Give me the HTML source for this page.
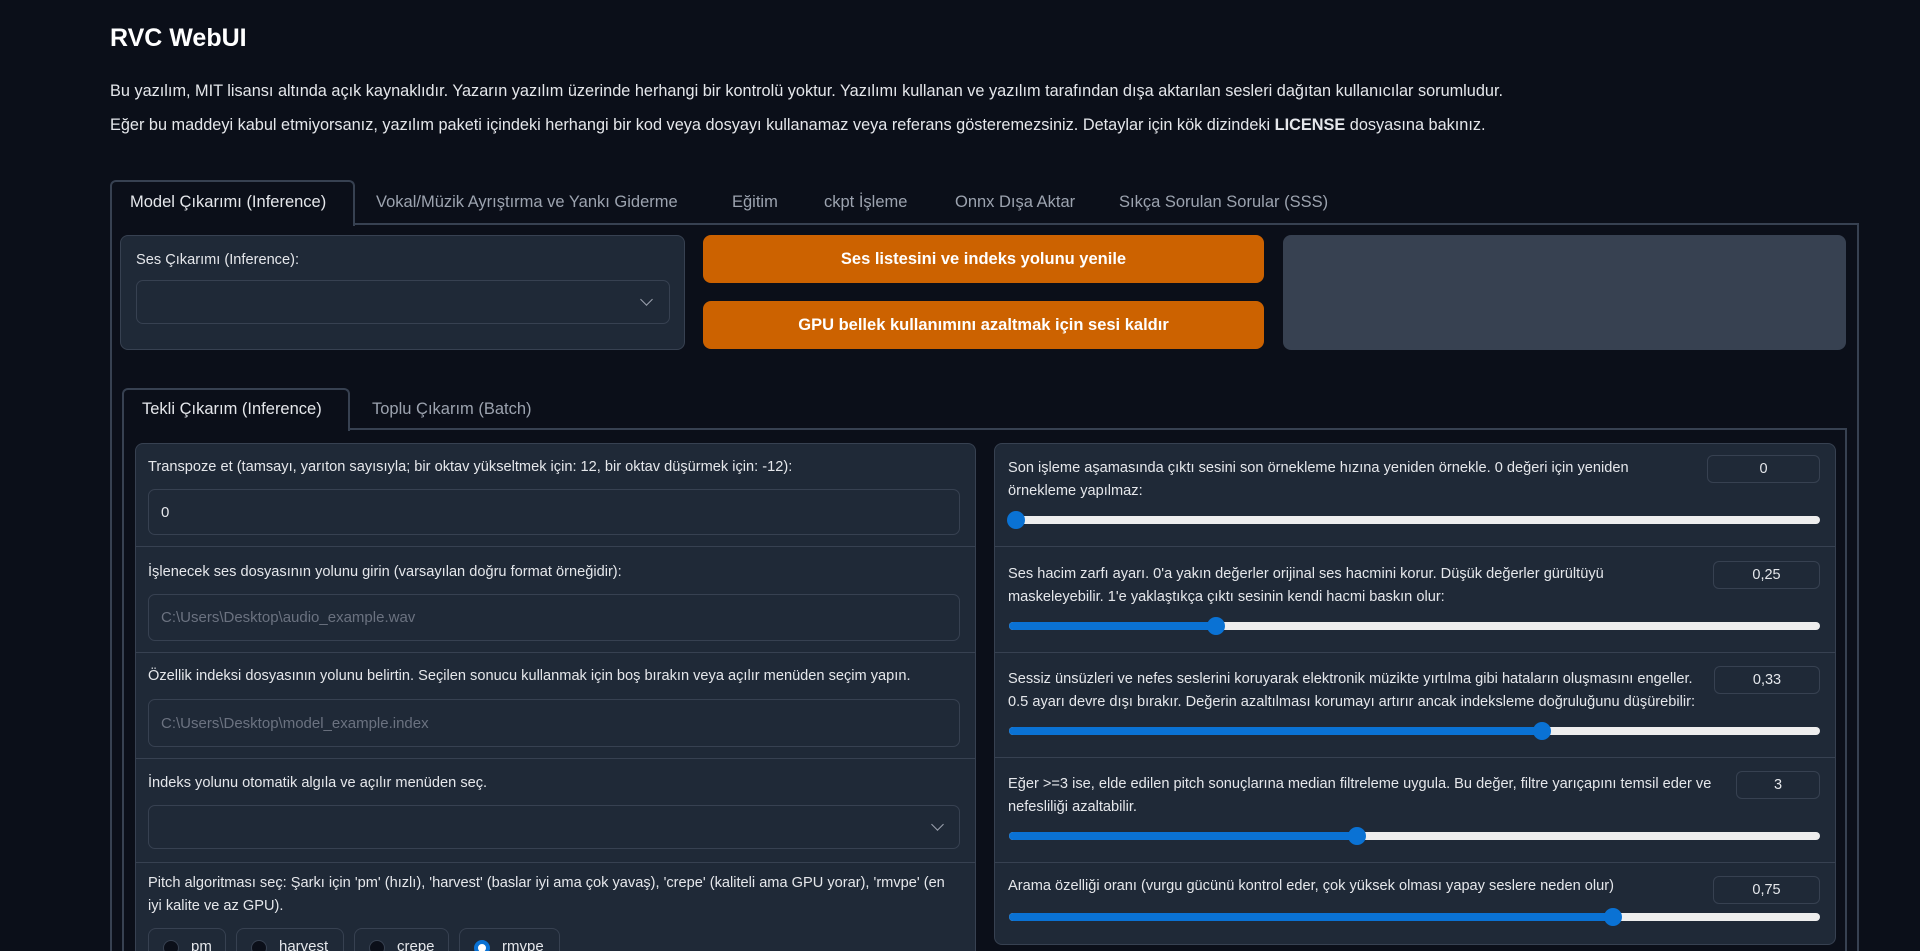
<!DOCTYPE html>
<html><head><meta charset="utf-8"><style>
*{box-sizing:border-box;margin:0;padding:0}
html{width:1920px;height:951px;overflow:hidden}
body{width:1920px;height:951px;overflow:hidden;background:#0b0f19;font-family:"Liberation Sans",sans-serif;color:#e5e7eb;position:relative}
.a{position:absolute}
h1{position:absolute;left:110px;top:24px;font-size:25px;font-weight:bold;color:#fff}
.p{position:absolute;left:110px;font-size:16.3px;color:#e5e7eb;white-space:nowrap}
.tab{position:absolute;top:193px;font-size:16.5px;color:#9ca3af;white-space:nowrap}
.box{position:absolute;background:#1f2937;border:1px solid #374151;border-radius:8px}
.lbl{position:absolute;font-size:14.6px;color:#e5e7eb;white-space:nowrap}
.inp{position:absolute;background:#1f2937;border:1px solid #374151;border-radius:7px;font-size:15px;color:#6b7280;padding:0 12px;display:flex;align-items:center}
.btn{position:absolute;background:#cc6200;border-radius:8px;color:#fff;font-weight:bold;font-size:16.5px;display:flex;align-items:center;justify-content:center}
.row{position:absolute;border-bottom:1px solid #374151}
.track{position:absolute;height:8px;background:#eeeeee;border-radius:4px}
.fill{position:absolute;left:0;top:0;height:8px;background:#0a72d4;border-radius:4px}
.thumb{position:absolute;top:-5px;width:18px;height:18px;border-radius:50%;background:#0a72d4;margin-left:-9px}
.num{position:absolute;height:28px;border:1px solid #374151;border-radius:6px;background:#1f2937;font-size:14.5px;color:#e5e7eb;display:flex;align-items:center;justify-content:center}
.chev{position:absolute;width:9px;height:9px;border-right:1.5px solid #9ca3af;border-bottom:1.5px solid #9ca3af;transform:rotate(45deg)}
.radio{position:absolute;top:928px;height:23px;border:1px solid #374151;border-bottom:none;border-radius:8px 8px 0 0;background:#1f2937;font-size:15px;padding:9px 0 0 42px;overflow:hidden;line-height:17px}
.radio i{position:absolute;left:14px;top:11px;width:16px;height:16px;border-radius:50%;background:#0b0f19;border:1px solid #374151}
</style></head><body>
<h1>RVC WebUI</h1>
<div class="p" style="top:82px">Bu yazılım, MIT lisansı altında açık kaynaklıdır. Yazarın yazılım üzerinde herhangi bir kontrolü yoktur. Yazılımı kullanan ve yazılım tarafından dışa aktarılan sesleri dağıtan kullanıcılar sorumludur.</div>
<div class="p" style="top:116px">Eğer bu maddeyi kabul etmiyorsanız, yazılım paketi içindeki herhangi bir kod veya dosyayı kullanamaz veya referans gösteremezsiniz. Detaylar için kök dizindeki <b>LICENSE</b> dosyasına bakınız.</div>

<div class="a" style="left:110px;top:223px;width:1749px;height:728px;border:2px solid #374151;border-bottom:none"></div>
<div class="a" style="left:110px;top:180px;width:245px;height:46px;border:2px solid #374151;border-bottom:none;border-radius:6px 6px 0 0;background:#0b0f19"></div>
<div class="tab" style="left:130px;color:#e5e7eb">Model Çıkarımı (Inference)</div>
<div class="tab" style="left:376px">Vokal/Müzik Ayrıştırma ve Yankı Giderme</div>
<div class="tab" style="left:732px">Eğitim</div>
<div class="tab" style="left:824px">ckpt İşleme</div>
<div class="tab" style="left:955px">Onnx Dışa Aktar</div>
<div class="tab" style="left:1119px">Sıkça Sorulan Sorular (SSS)</div>

<div class="box" style="left:120px;top:235px;width:565px;height:115px"></div>
<div class="lbl" style="left:136px;top:252px">Ses Çıkarımı (Inference):</div>
<div class="inp" style="left:136px;top:280px;width:534px;height:44px"></div>
<div class="chev" style="left:642px;top:295px"></div>
<div class="btn" style="left:703px;top:235px;width:561px;height:48px">Ses listesini ve indeks yolunu yenile</div>
<div class="btn" style="left:703px;top:301px;width:561px;height:48px">GPU bellek kullanımını azaltmak için sesi kaldır</div>
<div class="a" style="left:1283px;top:235px;width:563px;height:115px;background:#374151;border-radius:8px"></div>

<div class="a" style="left:122px;top:428px;width:1725px;height:523px;border:2px solid #374151;border-bottom:none"></div>
<div class="a" style="left:122px;top:388px;width:228px;height:43px;border:2px solid #374151;border-bottom:none;border-radius:6px 6px 0 0;background:#0b0f19"></div>
<div class="tab" style="left:142px;top:400px;color:#e5e7eb">Tekli Çıkarım (Inference)</div>
<div class="tab" style="left:372px;top:400px">Toplu Çıkarım (Batch)</div>

<div class="box" style="left:135px;top:443px;width:841px;height:508px;border-bottom:none;border-radius:8px 8px 0 0"></div>
<div class="row" style="left:136px;top:443px;width:839px;height:104px"></div>
<div class="row" style="left:136px;top:547px;width:839px;height:106px"></div>
<div class="row" style="left:136px;top:653px;width:839px;height:106px"></div>
<div class="row" style="left:136px;top:759px;width:839px;height:104px"></div>
<div class="lbl" style="left:148px;top:459px">Transpoze et (tamsayı, yarıton sayısıyla; bir oktav yükseltmek için: 12, bir oktav düşürmek için: -12):</div>
<div class="inp" style="left:148px;top:489px;width:812px;height:46px;color:#e5e7eb">0</div>
<div class="lbl" style="left:148px;top:564px">İşlenecek ses dosyasının yolunu girin (varsayılan doğru format örneğidir):</div>
<div class="inp" style="left:148px;top:594px;width:812px;height:47px">C:\Users\Desktop\audio_example.wav</div>
<div class="lbl" style="left:148px;top:668px">Özellik indeksi dosyasının yolunu belirtin. Seçilen sonucu kullanmak için boş bırakın veya açılır menüden seçim yapın.</div>
<div class="inp" style="left:148px;top:699px;width:812px;height:48px">C:\Users\Desktop\model_example.index</div>
<div class="lbl" style="left:148px;top:775px">İndeks yolunu otomatik algıla ve açılır menüden seç.</div>
<div class="inp" style="left:148px;top:805px;width:812px;height:44px"></div>
<div class="chev" style="left:933px;top:820px"></div>
<div class="lbl" style="left:148px;top:875px">Pitch algoritması seç: Şarkı için 'pm' (hızlı), 'harvest' (baslar iyi ama çok yavaş), 'crepe' (kaliteli ama GPU yorar), 'rmvpe' (en</div>
<div class="lbl" style="left:148px;top:898px">iyi kalite ve az GPU).</div>
<div class="radio" style="left:148px;width:78px"><i></i>pm</div>
<div class="radio" style="left:236px;width:108px"><i></i>harvest</div>
<div class="radio" style="left:354px;width:95px"><i></i>crepe</div>
<div class="radio" style="left:459px;width:101px"><i style="background:#fff;border:4px solid #0a72d4"></i>rmvpe</div>

<div class="box" style="left:994px;top:443px;width:842px;height:502px"></div>
<div class="row" style="left:995px;top:443px;width:840px;height:104px"></div>
<div class="row" style="left:995px;top:547px;width:840px;height:106px"></div>
<div class="row" style="left:995px;top:653px;width:840px;height:105px"></div>
<div class="row" style="left:995px;top:758px;width:840px;height:105px"></div>

<div class="lbl" style="left:1008px;top:457px;line-height:23px">Son işleme aşamasında çıktı sesini son örnekleme hızına yeniden örnekle. 0 değeri için yeniden<br>örnekleme yapılmaz:</div>
<div class="num" style="left:1707px;top:455px;width:113px">0</div>
<div class="track" style="left:1009px;top:516px;width:811px"><div class="thumb" style="left:7px"></div></div>

<div class="lbl" style="left:1008px;top:563px;line-height:23px">Ses hacim zarfı ayarı. 0'a yakın değerler orijinal ses hacmini korur. Düşük değerler gürültüyü<br>maskeleyebilir. 1'e yaklaştıkça çıktı sesinin kendi hacmi baskın olur:</div>
<div class="num" style="left:1713px;top:561px;width:107px">0,25</div>
<div class="track" style="left:1009px;top:622px;width:811px"><div class="fill" style="width:207px"></div><div class="thumb" style="left:207px"></div></div>

<div class="lbl" style="left:1008px;top:668px;line-height:23px">Sessiz ünsüzleri ve nefes seslerini koruyarak elektronik müzikte yırtılma gibi hataların oluşmasını engeller.<br>0.5 ayarı devre dışı bırakır. Değerin azaltılması korumayı artırır ancak indeksleme doğruluğunu düşürebilir:</div>
<div class="num" style="left:1714px;top:666px;width:106px">0,33</div>
<div class="track" style="left:1009px;top:727px;width:811px"><div class="fill" style="width:533px"></div><div class="thumb" style="left:533px"></div></div>

<div class="lbl" style="left:1008px;top:773px;line-height:23px">Eğer &gt;=3 ise, elde edilen pitch sonuçlarına median filtreleme uygula. Bu değer, filtre yarıçapını temsil eder ve<br>nefesliliği azaltabilir.</div>
<div class="num" style="left:1736px;top:771px;width:84px">3</div>
<div class="track" style="left:1009px;top:832px;width:811px"><div class="fill" style="width:348px"></div><div class="thumb" style="left:348px"></div></div>

<div class="lbl" style="left:1008px;top:878px">Arama özelliği oranı (vurgu gücünü kontrol eder, çok yüksek olması yapay seslere neden olur)</div>
<div class="num" style="left:1713px;top:876px;width:107px">0,75</div>
<div class="track" style="left:1009px;top:913px;width:811px"><div class="fill" style="width:604px"></div><div class="thumb" style="left:604px"></div></div>
</body></html>
